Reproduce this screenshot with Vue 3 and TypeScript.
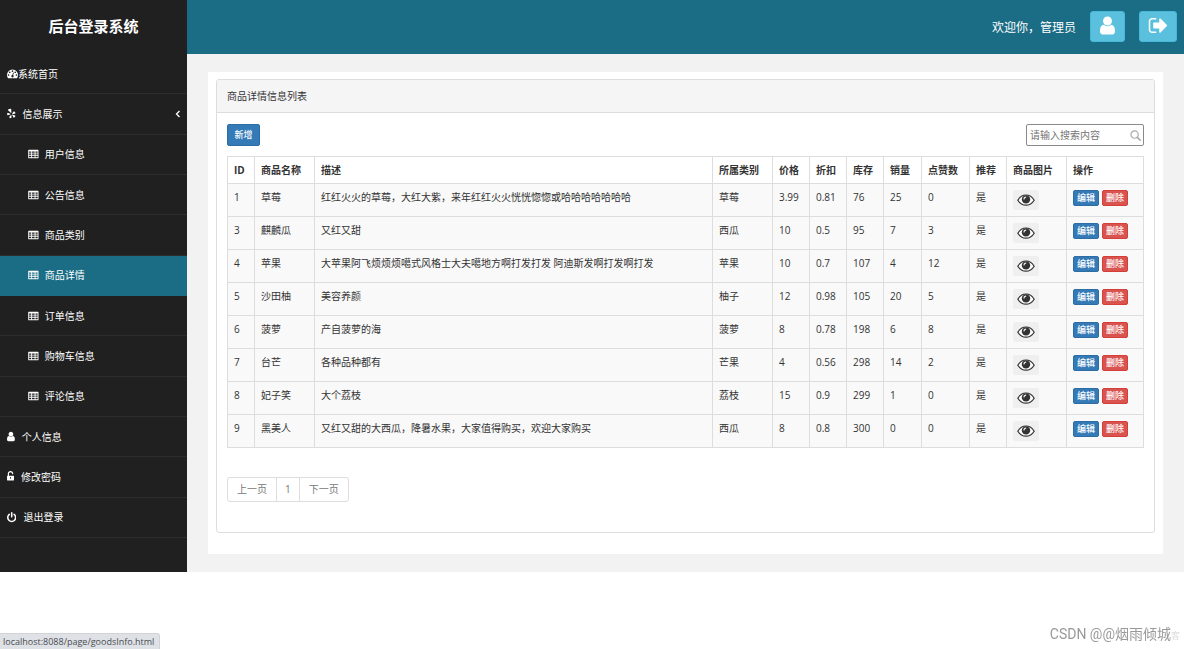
<script setup lang="ts">
import { ref } from 'vue'

interface MenuItem {
  label: string
  icon: string
  sub?: boolean
  active?: boolean
  arrow?: boolean
}

interface Goods {
  id: number
  name: string
  desc: string
  category: string
  price: string
  discount: string
  stock: number
  sales: number
  likes: number
}

const menu: MenuItem[] = [
  { label: '系统首页', icon: 'dashboard' },
  { label: '信息展示', icon: 'yelp', arrow: true },
  { label: '用户信息', icon: 'table', sub: true },
  { label: '公告信息', icon: 'table', sub: true },
  { label: '商品类别', icon: 'table', sub: true },
  { label: '商品详情', icon: 'table', sub: true, active: true },
  { label: '订单信息', icon: 'table', sub: true },
  { label: '购物车信息', icon: 'table', sub: true },
  { label: '评论信息', icon: 'table', sub: true },
  { label: '个人信息', icon: 'user' },
  { label: '修改密码', icon: 'unlock' },
  { label: '退出登录', icon: 'power' },
]

const viewBoxes: Record<string, string> = {
  dashboard: '0 0 1792 1792',
  yelp: '160 0 1400 1792',
  table: '96 0 1600 1792',
  user: '256 0 1280 1792',
  unlock: '244 0 1152 1792',
  power: '128 0 1536 1792',
}

const icons: Record<string, string> = {
  dashboard:
    'M384 1152q0-53-37.5-90.5t-90.5-37.5-90.5 37.5-37.5 90.5 37.5 90.5 90.5 37.5 90.5-37.5 37.5-90.5zm192-448q0-53-37.5-90.5t-90.5-37.5-90.5 37.5-37.5 90.5 37.5 90.5 90.5 37.5 90.5-37.5 37.5-90.5zm428 481l101-382q6-26-7.5-48.5t-38.5-29.5-48 6.5-30 39.5l-101 382q-60 5-107 43.5t-63 98.5q-20 77 20 146t117 89 146-20 89-117q16-60-6-117t-72-91zm660-33q0-53-37.5-90.5t-90.5-37.5-90.5 37.5-37.5 90.5 37.5 90.5 90.5 37.5 90.5-37.5 37.5-90.5zm-640-640q0-53-37.5-90.5t-90.5-37.5-90.5 37.5-37.5 90.5 37.5 90.5 90.5 37.5 90.5-37.5 37.5-90.5zm448 192q0-53-37.5-90.5t-90.5-37.5-90.5 37.5-37.5 90.5 37.5 90.5 90.5 37.5 90.5-37.5 37.5-90.5zm320 448q0 261-141 483-19 29-54 29h-1402q-35 0-54-29-141-221-141-483 0-182 71-348t191-286 286-191 348-71 348 71 286 191 191 286 71 348z',
  yelp:
    'M340 260Q560 120 790 130Q850 140 850 210L870 760Q850 860 770 790L330 370Q290 300 340 260zM260 790L680 950Q760 1000 680 1060L270 1190Q190 1190 190 1110Q180 950 210 840Q220 790 260 790zM800 1130Q880 1090 890 1180L880 1600Q860 1670 790 1660Q640 1630 540 1550Q490 1500 540 1440zM1010 1120Q1030 1050 1110 1090L1480 1230Q1550 1270 1520 1330Q1450 1470 1340 1560Q1270 1590 1230 1530L1020 1190zM1010 900L1250 570Q1300 520 1360 560Q1480 670 1540 810Q1560 870 1490 910L1080 1010Q980 1010 1010 900z',
  table:
    'M224 256h1344q96 0 96 96v1088q0 96-96 96h-1344q-96 0-96-96v-1088q0-96 96-96zM256 512v192h320v-192zM704 512v192h384v-192zM1216 512v192h320v-192zM256 832v192h320v-192zM704 832v192h384v-192zM1216 832v192h320v-192zM256 1152v224h320v-224zM704 1152v224h384v-224zM1216 1152v224h320v-224z',
  user:
    'M1536 1399q0 109-62.5 187t-150.5 78h-854q-88 0-150.5-78t-62.5-187q0-85 8.5-160.5t31.5-152 58.5-131 94-89 134.5-34.5q131 128 313 128t313-128q76 0 134.5 34.5t94 89 58.5 131 31.5 152 8.5 160.5zm-256-887q0 159-112.5 271.5t-271.5 112.5-271.5-112.5-112.5-271.5 112.5-271.5 271.5-112.5 271.5 112.5 112.5 271.5z',
  unlock:
    'M1300 768q40 0 68 28t28 68v576q0 40-28 68t-68 28h-960q-40 0-68-28t-28-68v-576q0-40 28-68t68-28h32v-320q0-185 131.5-316.5t316.5-131.5 316.5 131.5 131.5 316.5q0 26-19 45t-45 19h-64q-26 0-45-19t-19-45q0-106-75-181t-181-75-181 75-75 181v320zM756 960v320h128v-320z',
  power:
    'M1664 896q0 156-61 298t-164 245-245 164-298 61-298-61-245-164-164-245-61-298q0-182 80.5-343t226.5-270q43-32 95.5-25t83.5 50q32 42 24.5 94.5t-49.5 84.5q-98 74-151.5 181t-53.5 228q0 104 40.5 198.5t109.5 163.5 163.5 109.5 198.5 40.5 198.5-40.5 163.5-109.5 109.5-163.5 40.5-198.5q0-121-53.5-228t-151.5-181q-42-32-49.5-84.5t24.5-94.5q31-43 84-50t95 25q146 109 226.5 270t80.5 343zm-640-768v640q0 52-38 90t-90 38-90-38-38-90v-640q0-52 38-90t90-38 90 38 38 90z',
  signOut:
    'M704 1440q0 4 1 20t.5 26.5-3 23.5-10 19.5-20.5 6.5h-320q-119 0-203.5-84.5t-84.5-203.5v-704q0-119 84.5-203.5t203.5-84.5h320q13 0 22.5 9.5t9.5 22.5q0 4 1 20t.5 26.5-3 23.5-10 19.5-20.5 6.5h-320q-66 0-113 47t-47 113v704q0 66 47 113t113 47h312l11.5 1 11.5 3 8 5.5 7 9 2 13.5zm928-544q0 26-19 45l-544 544q-19 19-45 19t-45-19-19-45v-288h-448q-26 0-45-19t-19-45v-384q0-26 19-45t45-19h448v-288q0-26 19-45t45-19 45 19l544 544q19 19 19 45z',
}

const columns = ['ID', '商品名称', '描述', '所属类别', '价格', '折扣', '库存', '销量', '点赞数', '推荐', '商品图片', '操作']

const goods: Goods[] = [
  { id: 1, name: '草莓', desc: '红红火火的草莓，大红大紫，来年红红火火恍恍惚惚或哈哈哈哈哈哈哈', category: '草莓', price: '3.99', discount: '0.81', stock: 76, sales: 25, likes: 0 },
  { id: 3, name: '麒麟瓜', desc: '又红又甜', category: '西瓜', price: '10', discount: '0.5', stock: 95, sales: 7, likes: 3 },
  { id: 4, name: '苹果', desc: '大苹果阿飞烦烦烦噶式风格士大夫噶地方啊打发打发 阿迪斯发啊打发啊打发', category: '苹果', price: '10', discount: '0.7', stock: 107, sales: 4, likes: 12 },
  { id: 5, name: '沙田柚', desc: '美容养颜', category: '柚子', price: '12', discount: '0.98', stock: 105, sales: 20, likes: 5 },
  { id: 6, name: '菠萝', desc: '产自菠萝的海', category: '菠萝', price: '8', discount: '0.78', stock: 198, sales: 6, likes: 8 },
  { id: 7, name: '台芒', desc: '各种品种都有', category: '芒果', price: '4', discount: '0.56', stock: 298, sales: 14, likes: 2 },
  { id: 8, name: '妃子笑', desc: '大个荔枝', category: '荔枝', price: '15', discount: '0.9', stock: 299, sales: 1, likes: 0 },
  { id: 9, name: '黑美人', desc: '又红又甜的大西瓜，降暑水果，大家值得购买，欢迎大家购买', category: '西瓜', price: '8', discount: '0.8', stock: 300, sales: 0, likes: 0 },
]

const keyword = ref('')
</script>

<template>
  <div class="layout">
    <aside class="sidebar">
      <h1 class="brand">后台登录系统</h1>
      <nav class="menu" aria-label="主菜单">
        <a
          v-for="item in menu"
          :key="item.label"
          href="#"
          class="menu-item"
          :class="[item.icon, { sub: item.sub, active: item.active }]"
        >
          <svg class="menu-icon" :viewBox="viewBoxes[item.icon]" aria-hidden="true">
            <path :d="icons[item.icon]" fill="currentColor" fill-rule="evenodd" />
          </svg>
          <span>{{ item.label }}</span>
          <svg v-if="item.arrow" class="arrow" viewBox="0 0 6 8" aria-hidden="true">
            <path d="M4.500 1L1.500 4L4.500 7" fill="none" stroke="currentColor" stroke-width="1.300" />
          </svg>
        </a>
      </nav>
    </aside>

    <div class="main">
      <header class="topbar">
        <span class="welcome">欢迎你，管理员</span>
        <button type="button" class="top-btn" aria-label="个人信息">
          <svg viewBox="0 0 1792 1792" aria-hidden="true"><path :d="icons.user" fill="currentColor" /></svg>
        </button>
        <button type="button" class="top-btn wide" aria-label="退出登录">
          <svg viewBox="0 0 1792 1792" aria-hidden="true"><path :d="icons.signOut" fill="currentColor" /></svg>
        </button>
      </header>

      <main class="content">
        <div class="page">
          <section class="panel">
            <h2 class="panel-head">商品详情信息列表</h2>
            <div class="panel-body">
              <div class="tools">
                <button type="button" class="btn add">新增</button>
                <label class="search">
                  <input v-model="keyword" type="text" placeholder="请输入搜索内容" aria-label="请输入搜索内容" />
                  <svg viewBox="0 0 12 12" aria-hidden="true">
                    <circle cx="5" cy="5" r="4" fill="none" stroke="currentColor" stroke-width="1.300" />
                    <path d="M8 8L11 11" stroke="currentColor" stroke-width="1.700" stroke-linecap="round" />
                  </svg>
                </label>
              </div>

              <table class="goods">
                <colgroup>
                  <col v-for="(c, i) in columns" :key="c" :class="'c' + i" />
                </colgroup>
                <thead>
                  <tr>
                    <th v-for="c in columns" :key="c" scope="col">{{ c }}</th>
                  </tr>
                </thead>
                <tbody>
                  <tr v-for="g in goods" :key="g.id">
                    <td>{{ g.id }}</td>
                    <td>{{ g.name }}</td>
                    <td>{{ g.desc }}</td>
                    <td>{{ g.category }}</td>
                    <td>{{ g.price }}</td>
                    <td>{{ g.discount }}</td>
                    <td>{{ g.stock }}</td>
                    <td>{{ g.sales }}</td>
                    <td>{{ g.likes }}</td>
                    <td>是</td>
                    <td>
                      <button type="button" class="view" :aria-label="'查看' + g.name + '图片'">
                        <svg viewBox="0 0 18 12" aria-hidden="true">
                          <path d="M.8 6.200Q4 1 9 1T17.200 6.200Q14 11.200 9 11.200T.8 6.200z" fill="#fbfbfb" stroke="currentColor" stroke-width="1.200" />
                          <circle cx="9" cy="5.400" r="4.200" fill="currentColor" />
                          <path d="M7 5Q7 3.500 8.700 3.200" fill="none" stroke="#eee" stroke-width="1.200" stroke-linecap="round" />
                        </svg>
                      </button>
                    </td>
                    <td>
                      <div class="actions">
                        <button type="button" class="btn edit">编辑</button>
                        <button type="button" class="btn remove">删除</button>
                      </div>
                    </td>
                  </tr>
                </tbody>
              </table>

              <nav class="pager" aria-label="分页">
                <a href="#">上一页</a>
                <a href="#" class="num">1</a>
                <a href="#">下一页</a>
              </nav>
            </div>
          </section>
        </div>
      </main>
    </div>
  </div>

  <div class="status">localhost:8088/page/goodsInfo.html</div>
  <div class="watermark">CSDN @@烟雨倾城<span class="faint">客</span></div>
</template>

<style>
body {
  margin: 0;
  background: #fff;
}
</style>

<style scoped>
.layout,
.status {
  font-family: 'Open Sans', 'Noto Sans CJK SC', sans-serif;
}
.layout {
  display: flex;
  font-size: 10px;
  line-height: 14px;
  color: #333;
}
.layout *,
.status {
  box-sizing: border-box;
}
button,
input {
  font: inherit;
  margin: 0;
}
a {
  color: inherit;
  text-decoration: none;
}
svg {
  display: block;
}

.sidebar {
  flex: 0 0 187px;
  background: #202020;
  color: #fff;
}
.brand {
  margin: 0;
  height: 54px;
  font-size: 15px;
  line-height: 53px;
  text-align: center;
}
.menu {
  display: grid;
  grid-auto-rows: 1fr;
  height: 484px;
}
.menu-item {
  display: flex;
  align-items: center;
  gap: 7px;
  padding: 0 6px 0 7px;
  border-bottom: 1px solid #2d2d2d;
}
.menu-item.dashboard {
  gap: 0;
}
.menu-item.sub {
  gap: 6px;
  padding-left: 28px;
}
.menu-item.active {
  background: #1b6d85;
  border-color: #1b6d85;
}
.menu-icon {
  width: auto;
  height: 11px;
}
.sub .menu-icon {
  height: 12px;
}
.arrow {
  width: 6px;
  height: 8px;
  margin-left: auto;
}

.main {
  flex: 1;
  min-width: 0;
  background: #f2f2f2;
}
.topbar {
  display: flex;
  justify-content: flex-end;
  align-items: center;
  height: 54px;
  padding: 0 7px 2px 0;
  background: #1b6d85;
  color: #fff;
}
.welcome {
  margin-right: 14px;
  padding-top: 4px;
  font-size: 12px;
}
.top-btn {
  display: flex;
  align-items: center;
  justify-content: center;
  width: 35px;
  height: 31px;
  padding: 0 0 2px;
  border: 1px solid #46b8da;
  border-radius: 3px;
  background: #5bc0de;
  color: #fff;
}
.top-btn.wide {
  width: 38px;
  margin-left: 14px;
}
.top-btn svg {
  width: 21px;
  height: 21px;
}

.content {
  padding: 18px 21px;
}
.page {
  padding: 7px 8px 21px;
  background: #fff;
}
.panel {
  border: 1px solid #ddd;
  border-radius: 3px;
}
.panel-head {
  margin: 0;
  padding: 9px 10px;
  border-bottom: 1px solid #ddd;
  border-radius: 3px 3px 0 0;
  background: #f5f5f5;
  font-size: 10px;
  font-weight: 400;
}
.panel-body {
  padding: 11px 10px 30px;
}
.tools {
  display: flex;
  justify-content: space-between;
  margin-bottom: 10px;
}
.btn {
  padding: 0;
  border: 1px solid #2e6da4;
  border-radius: 2px;
  background: #337ab7;
  color: #fff;
  font-size: 9px;
  font-weight: 500;
  line-height: 14px;
}
.add {
  width: 33px;
  height: 22px;
}
.search {
  display: flex;
  align-items: center;
  width: 118px;
  height: 22px;
  padding: 0 2px 0 3px;
  border: 1px solid #8a8a8a;
  border-radius: 2px;
}
.search input {
  flex: 1;
  min-width: 0;
  padding: 0;
  border: 0;
  outline: 0;
  background: none;
}
.search input::placeholder {
  color: #757575;
}
.search svg {
  width: 11px;
  height: 11px;
  color: #aaa;
}

.goods {
  width: 100%;
  table-layout: fixed;
  border-collapse: collapse;
}
.goods th,
.goods td {
  padding: 0 6px;
  border: 1px solid #ddd;
  text-align: left;
  vertical-align: top;
}
.goods th {
  height: 27px;
  padding-top: 6px;
  white-space: nowrap;
}
.goods td {
  height: 33px;
  padding-top: 6px;
}
.goods tbody tr {
  background: #f9f9f9;
}
.c0 { width: 27px; }
.c1 { width: 60px; }
.c3 { width: 60px; }
.c4 { width: 37px; }
.c5 { width: 37px; }
.c6 { width: 37px; }
.c7 { width: 38px; }
.c8 { width: 48px; }
.c9 { width: 37px; }
.c10 { width: 60px; }
.c11 { width: 77px; }

.view {
  display: flex;
  align-items: center;
  justify-content: center;
  width: 26px;
  height: 20px;
  padding: 0;
  border: 0;
  border-radius: 2px;
  background: #efefef;
  color: #333;
}
.view svg {
  width: 18px;
  height: 12px;
}
.actions {
  display: flex;
  gap: 3px;
}
.actions .btn {
  width: 26px;
  height: 16px;
}
.actions .remove {
  border-color: #d43f3a;
  background: #d9534f;
}

.pager {
  display: inline-flex;
  margin-top: 29px;
  border: 1px solid #ddd;
  border-radius: 3px;
  color: #777;
}
.pager a {
  padding: 4px 9px 5px;
}
.pager .num {
  padding: 4px 8px 5px;
}
.pager a + a {
  border-left: 1px solid #ddd;
}

.status {
  position: fixed;
  left: 0;
  bottom: 0;
  height: 16px;
  padding: 0 5px 0 3px;
  border: 1px solid #d0d3d8;
  border-width: 1px 1px 0 0;
  border-radius: 0 3px 0 0;
  background: #dee1e6;
  color: #4a4d51;
  font-size: 9px;
  line-height: 15px;
}
.watermark {
  position: fixed;
  right: 4px;
  bottom: 4px;
  font-family: Roboto, 'Noto Sans CJK SC', sans-serif;
  font-size: 14px;
  line-height: 18px;
  color: #999;
}
.faint {
  font-size: 9px;
  color: #ddd;
}
</style>
